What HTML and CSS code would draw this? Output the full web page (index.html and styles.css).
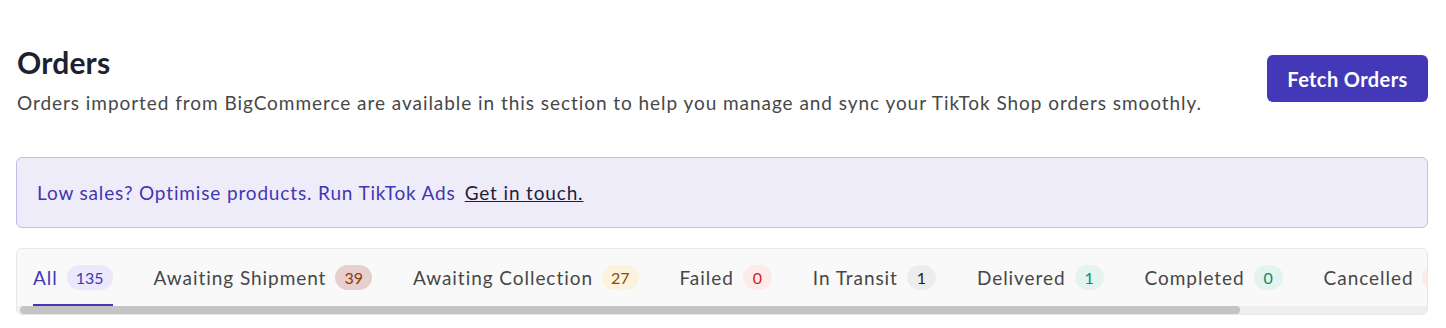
FILE: index.html
```html
<!DOCTYPE html>
<html lang="en">
<head>
    <meta charset="UTF-8">
    <meta name="viewport" content="width=device-width, initial-scale=1.0">
    <title>Orders</title>
    <link rel="stylesheet" href="styles.css">
</head>
<body>

    <div class="page">
        <div class="page-header">
            <div class="page-title">
                <h1>Orders</h1>
                <p>Orders imported from BigCommerce are available in this section to help you manage and sync your TikTok Shop orders smoothly.</p>
            </div>
            <button class="btn-primary">Fetch Orders</button>
        </div>

        <div class="banner">
            <span>Low sales? Optimise products. Run TikTok Ads</span>
            <a href="#">Get in touch.</a>
        </div>

        <div class="tabs-box">
            <div class="tabs">
                <a href="#" class="tab active">All <span class="badge badge-all">135</span></a>
                <a href="#" class="tab">Awaiting Shipment <span class="badge badge-shipment">39</span></a>
                <a href="#" class="tab">Awaiting Collection <span class="badge badge-collection">27</span></a>
                <a href="#" class="tab">Failed <span class="badge badge-failed">0</span></a>
                <a href="#" class="tab">In Transit <span class="badge badge-transit">1</span></a>
                <a href="#" class="tab">Delivered <span class="badge badge-green">1</span></a>
                <a href="#" class="tab">Completed <span class="badge badge-green">0</span></a>
                <a href="#" class="tab">Cancelled <span class="badge badge-failed"></span></a>
            </div>
            <!-- scrollbar drawn by hand, the browser hides the native one in screenshots -->
            <div class="scrollbar">
                <div class="scrollbar-thumb" style="width: 1220px;"></div>
            </div>
        </div>
    </div>

</body>
</html>
```

FILE: styles.css
```css
body {
    margin: 0;
    font-family: 'Lato', sans-serif;
    color: #444;
    background: #fff;
}

.page {
    padding: 45px 18px 0 16px;
}

.page-header {
    display: flex;
    justify-content: space-between;
    align-items: flex-start;
}

.page-title h1 {
    margin: 0 0 0 1px;
    font-size: 30px;
    font-weight: 700;
    letter-spacing: 0.2px;
    color: #1c2230;
    line-height: 34px;
}

.page-title p {
    margin: 12px 0 0 1px;
    font-size: 19px;
    letter-spacing: 0.95px;
    line-height: 24px;
    color: #474747;
}

.btn-primary {
    margin-top: 10px;
    width: 161px;
    height: 47px;
    background-color: #4338b8;
    color: #fff;
    border: none;
    border-radius: 6px;
    font-family: inherit;
    font-size: 20px;
    font-weight: 700;
    letter-spacing: 0.4px;
    cursor: pointer;
}

.banner {
    margin-top: 42px;
    height: 69px;
    display: flex;
    align-items: center;
    gap: 9px;
    padding: 0 20px;
    background-color: #efecf9;
    border: 1px solid #c3bceb;
    border-radius: 6px;
    font-size: 19px;
    letter-spacing: 0.85px;
    color: #3f37b4;
}

.banner a {
    color: #1f1d3d;
    text-decoration: underline;
}

/* tabs */
.tabs-box {
    margin-top: 20px;
    background-color: #f9f9f9;
    border: 1px solid #e8e8e8;
    border-radius: 6px;
    overflow: hidden;
}

.tabs {
    display: flex;
    gap: 41px;
    padding: 0 16px;
    overflow: hidden;
}

.tab {
    display: flex;
    align-items: center;
    gap: 9px;
    height: 57px;
    padding-top: 2px;
    box-sizing: border-box;
    white-space: nowrap;
    text-decoration: none;
    font-size: 19px;
    letter-spacing: 0.95px;
    color: #474747;
    border-bottom: 2px solid transparent;
}

.tab.active {
    color: #4338b8;
    border-bottom-color: #4338b8;
}

.badge {
    display: inline-block;
    min-width: 11px;
    padding: 0 9px;
    height: 25px;
    line-height: 25px;
    border-radius: 13px;
    font-size: 16px;
    letter-spacing: 0;
    text-align: center;
}

.badge-all {
    background: #ebe8fb;
    color: #4338b8;
}

.badge-shipment {
    background: #e6cfcc;
    color: #8a3a10;
}

.badge-collection {
    background: #fdf3dc;
    color: #8a4a08;
}

.badge-failed {
    background: #fdebea;
    color: #d0211b;
}

.badge-transit {
    background: #eceeee;
    color: #222;
}

.badge-green {
    background: #e3f3ed;
    color: #0b8a6a;
}

.scrollbar {
    height: 8px;
    padding: 0 3px;
    background-color: #efefef;
}

.scrollbar-thumb {
    height: 8px;
    border-radius: 4px;
    background-color: #c4c4c4;
}
```
